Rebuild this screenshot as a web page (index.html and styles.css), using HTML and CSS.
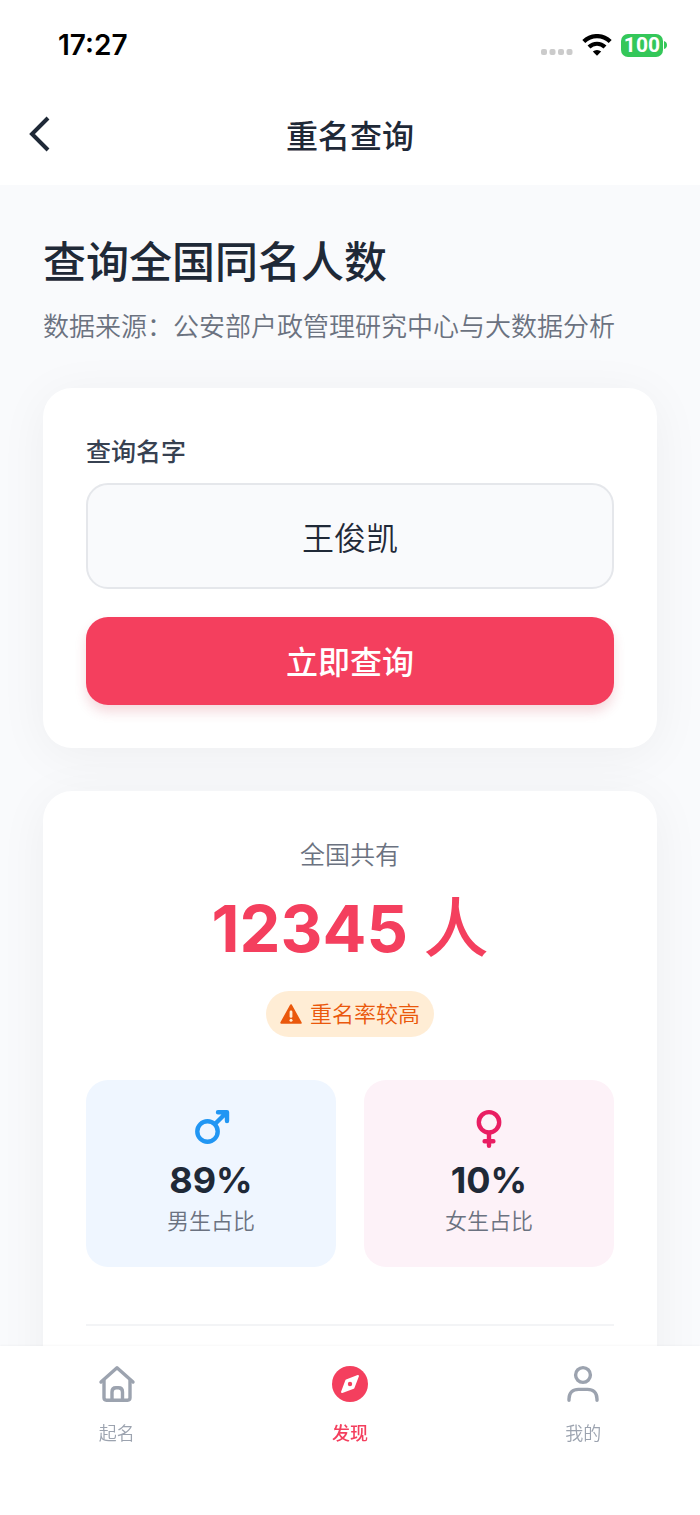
FILE: index.html
```html
<!DOCTYPE html>
<html lang="zh-CN">
<head>
    <meta charset="UTF-8">
    <meta name="viewport" content="width=device-width, initial-scale=1.0">
    <title>重名查询</title>
    <link rel="stylesheet" href="styles.css">
</head>
<body>
    <div class="status-bar">
        <span class="time">17:27</span>
        <div class="status-icons">
            <svg class="signal" width="32" height="6" viewBox="0 0 32 6" fill="#cbcbcb">
                <rect x="0" y="0" width="6" height="6" rx="2"/>
                <rect x="8.5" y="0" width="6" height="6" rx="2"/>
                <rect x="17" y="0" width="6" height="6" rx="2"/>
                <rect x="25.5" y="0" width="6" height="6" rx="2"/>
            </svg>
            <svg class="wifi" width="30" height="22" viewBox="0 0 30 22">
                <path d="M1.8 7.4 A19 19 0 0 1 28.2 7.4" fill="none" stroke="#000" stroke-width="4.2"/>
                <path d="M7 13 A11.5 11.5 0 0 1 23 13" fill="none" stroke="#000" stroke-width="4.2"/>
                <path d="M15 21.8 L10.8 17.6 A6 6 0 0 1 19.2 17.6 Z" fill="#000"/>
            </svg>
            <div class="battery">
                <span class="battery-level">100</span>
                <svg width="3" height="8" viewBox="0 0 3 8"><path d="M0 0 Q3 1 3 4 T0 8 Z" fill="#34c759"/></svg>
            </div>
        </div>
    </div>

    <header class="top-bar">
        <button type="button" class="back" aria-label="返回">
            <svg width="22" height="36" viewBox="0 0 22 36" fill="none" stroke="#1f2937" stroke-width="4">
                <path d="M19 2 L3 18 L19 34"/>
            </svg>
        </button>
        <h1>重名查询</h1>
    </header>

    <main>
        <h2>查询全国同名人数</h2>
        <p class="source">数据来源：公安部户政管理研究中心与大数据分析</p>

        <form class="card search">
            <label for="name">查询名字</label>
            <input type="text" id="name" value="王俊凯">
            <button type="button">立即查询</button>
        </form>

        <section class="card result">
            <p class="caption">全国共有</p>
            <p class="total">12345 <span class="unit">人</span></p>
            <p class="badge">
                <svg width="22" height="22" viewBox="0 0 22 22">
                    <path d="M11 2.2 L20.7 19.8 H1.3 Z" fill="#ea580c" stroke="#ea580c" stroke-width="2" stroke-linejoin="round"/>
                    <path d="M11 9 V13.4" stroke="#ffedd5" stroke-width="2.8" stroke-linecap="round"/>
                    <circle cx="11" cy="17.2" r="1.5" fill="#ffedd5"/>
                </svg>
                重名率较高
            </p>
            <div class="ratios">
                <div class="ratio male">
                    <svg width="40" height="40" viewBox="0 0 40 40" fill="none" stroke="#2196f3" stroke-width="4.4" stroke-linecap="round" stroke-linejoin="round">
                        <circle cx="16.5" cy="23.5" r="10.2"/>
                        <path d="M24 16 L35.5 4.5 M27 4.2 H36 V13 M34 5.5 L35 7"/>
                    </svg>
                    <strong>89%</strong>
                    <span>男生占比</span>
                </div>
                <div class="ratio female">
                    <svg width="40" height="40" viewBox="0 0 40 40" fill="none" stroke="#e91e63" stroke-width="4.4" stroke-linecap="round">
                        <circle cx="20" cy="14.3" r="10.2"/>
                        <path d="M20 25 V37.8 M15.6 33.3 H24.4"/>
                    </svg>
                    <strong>10%</strong>
                    <span>女生占比</span>
                </div>
            </div>
            <div class="more"></div>
        </section>
    </main>

    <nav class="tabs">
        <a href="#">
            <svg width="38" height="38" viewBox="0 0 38 38" fill="none" stroke="#9ca3af" stroke-width="3.4" stroke-linecap="round" stroke-linejoin="round">
                <path d="M3 17 L19 2.8 L35 17"/>
                <path d="M6 15.5 V32.8 Q6 35.2 8.4 35.2 H29.6 Q32 35.2 32 32.8 V15.5"/>
                <path d="M14 35 V27 Q14 22.8 18 22.8 H20.5 Q24.5 22.8 24.5 27 V35"/>
            </svg>
            起名
        </a>
        <a href="#" class="active">
            <svg width="38" height="38" viewBox="0 0 38 38">
                <circle cx="19" cy="19" r="18" fill="#f43f5e"/>
                <path d="M27 11 L22.4 22.8 L11 27 L15.4 15.4 Z" fill="#fff" stroke="#fff" stroke-width="2" stroke-linejoin="round"/>
                <circle cx="19" cy="19" r="2.2" fill="#f43f5e"/>
            </svg>
            发现
        </a>
        <a href="#">
            <svg width="38" height="38" viewBox="0 0 38 38" fill="none" stroke="#9ca3af" stroke-width="3.4" stroke-linecap="round">
                <circle cx="19" cy="10" r="7.4"/>
                <path d="M5 35.3 V34 C5 27.5 9 24.4 14.5 24.4 H23.5 C29 24.4 33 27.5 33 34 V35.3"/>
            </svg>
            我的
        </a>
    </nav>
</body>
</html>
```

FILE: styles.css
```css
* {
    box-sizing: border-box;
}
body {
    margin: 0;
    height: 100vh;
    display: flex;
    flex-direction: column;
    background-color: #fff;
    color: #1f2937;
    font-family: Inter, "Noto Sans CJK SC", sans-serif;
}
h1, h2, p {
    margin: 0;
}
button, input {
    font-family: inherit;
}
svg {
    display: block;
}

.status-bar {
    height: 90px;
    padding: 0 33px 0 58px;
    display: flex;
    justify-content: space-between;
    align-items: center;
    color: #000;
}
.time {
    font-size: 28px;
    font-weight: 600;
}
.status-icons {
    display: flex;
    align-items: center;
    gap: 9px;
}
.signal {
    margin-top: 14px;
}
.battery {
    display: flex;
    align-items: center;
    gap: 1px;
}
.battery-level {
    padding: 0 3px;
    border-radius: 7px;
    background-color: #34c759;
    color: #fff;
    font-family: Roboto, sans-serif;
    font-size: 21px;
    font-weight: 700;
    line-height: 23px;
}

.top-bar {
    height: 95px;
    padding: 0 29px 7px;
    display: grid;
    grid-template-columns: 1fr auto 1fr;
    align-items: center;
}
.back {
    justify-self: start;
    padding: 0;
    border: none;
    background: none;
    cursor: pointer;
}
h1 {
    font-size: 32px;
    font-weight: 500;
}

main {
    flex: 1;
    min-height: 0;
    overflow-y: auto;
    scrollbar-width: none;
    padding: 44px 43px;
    background-color: #f9fafc;
}
h2 {
    font-size: 43px;
    font-weight: 500;
    line-height: 66px;
}
.source {
    margin-top: 14px;
    color: #6b7280;
    font-size: 26px;
    font-weight: 350;
    line-height: 36px;
}
.card {
    padding: 43px;
    border-radius: 29px;
    background-color: #fff;
    box-shadow: 0 7px 50px rgba(0, 0, 0, 0.05);
    margin-top: 43px;
}
.search {
    display: flex;
    flex-direction: column;
}
.search label {
    color: #374151;
    font-size: 25px;
    font-weight: 500;
    line-height: 42px;
}
.search input {
    width: 100%;
    height: 106px;
    margin: 10px 0 28px;
    padding: 0 22px;
    border: 2px solid #e5e7eb;
    border-radius: 22px;
    background-color: #f9fafc;
    color: #1f2937;
    font-size: 32px;
    font-weight: 350;
    text-align: center;
}
.search button {
    height: 88px;
    padding: 0 22px 3px;
    border: none;
    border-radius: 22px;
    background-color: #f43f5e;
    box-shadow: 0 7px 12px rgba(200, 50, 70, 0.18);
    color: #fff;
    font-size: 32px;
    font-weight: 500;
    cursor: pointer;
}

.result {
    text-align: center;
}
.caption {
    color: #6b7280;
    font-size: 25px;
    font-weight: 350;
    line-height: 42px;
}
.total {
    color: #f43f5e;
    font-size: 65px;
    font-weight: 700;
    line-height: 92px;
    margin-top: 7px;
}
.unit {
    font-weight: 500;
}
.badge {
    display: flex;
    align-items: center;
    gap: 8px;
    width: fit-content;
    height: 46px;
    margin: 16px auto 0;
    padding: 0 14px;
    border-radius: 23px;
    background-color: #ffedd5;
    color: #ea580c;
    font-size: 22px;
    font-weight: 350;
    line-height: 32px;
}
.ratios {
    display: grid;
    grid-template-columns: 1fr 1fr;
    gap: 28px;
    margin-top: 43px;
}
.ratio {
    display: flex;
    flex-direction: column;
    align-items: center;
    padding: 28px 28px 29px;
    border-radius: 22px;
}
.male {
    background-color: #eff6ff;
}
.female {
    background-color: #fdf2f8;
}
.ratio strong {
    margin-top: 7px;
    font-size: 36px;
    line-height: 50px;
}
.ratio span {
    color: #6b7280;
    font-size: 22px;
    font-weight: 350;
    line-height: 33px;
}
.more {
    height: 58px;
    margin-top: 57px;
    border-top: 2px solid #f3f4f6;
}

.tabs {
    position: relative;
    display: grid;
    grid-template-columns: repeat(3, 1fr);
    height: 169px;
    padding-top: 19px;
    background-color: #fff;
    box-shadow: 0 -1px 2px rgba(0, 0, 0, 0.03);
}
.tabs a {
    display: flex;
    flex-direction: column;
    align-items: center;
    gap: 18px;
    color: #9ca3af;
    font-size: 18px;
    font-weight: 350;
    line-height: 26px;
    text-decoration: none;
}
.tabs .active {
    color: #f43f5e;
    font-weight: 500;
}
```
